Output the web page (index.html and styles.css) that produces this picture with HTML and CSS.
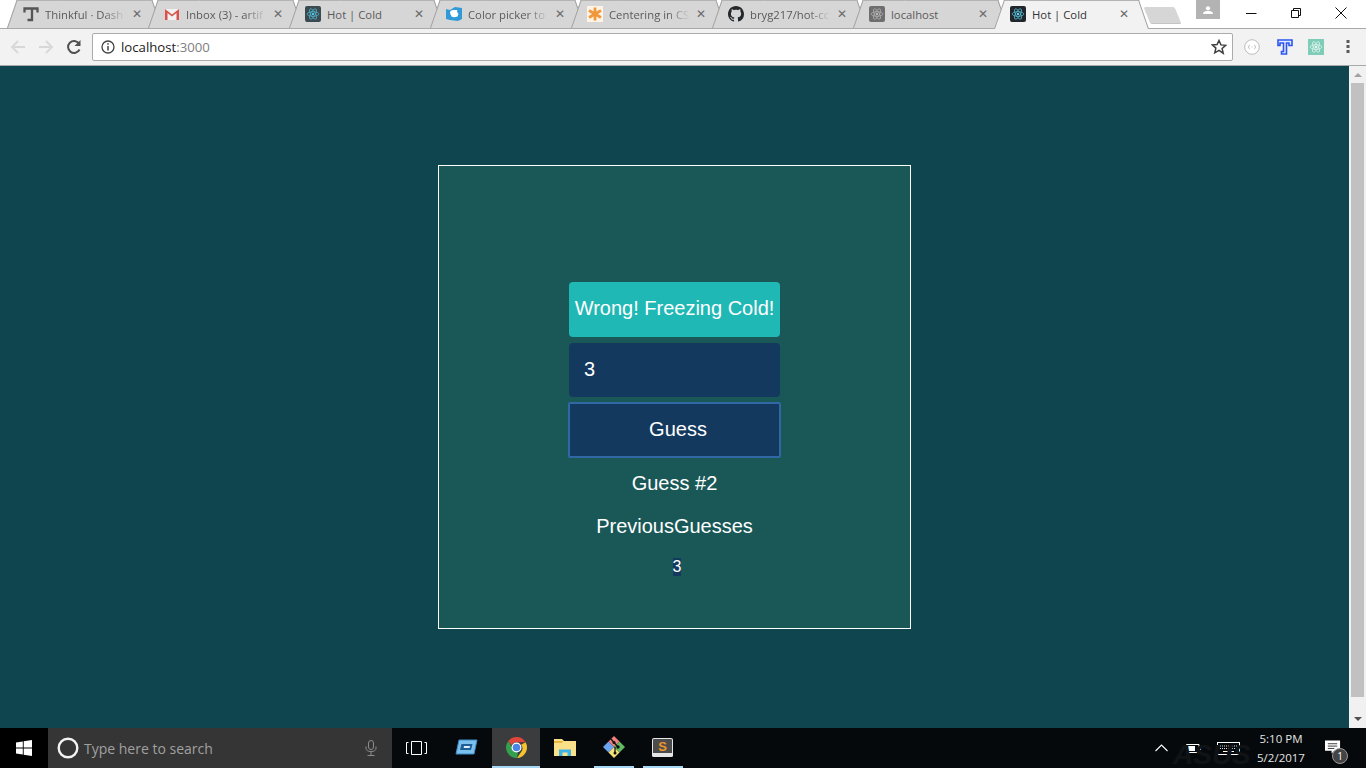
FILE: index.html
```html
<!DOCTYPE html>
<html lang="en">
<head>
<meta charset="utf-8">
<title>Hot | Cold</title>
<link rel="stylesheet" href="styles.css">
</head>
<body>
<svg class="defs" width="0" height="0" aria-hidden="true">
  <symbol id="atom" viewBox="0 0 24 24">
    <circle cx="12" cy="12" r="2.1" fill="currentColor"/>
    <g fill="none" stroke="currentColor" stroke-width="1.1">
      <ellipse cx="12" cy="12" rx="10" ry="4"/>
      <ellipse cx="12" cy="12" rx="10" ry="4" transform="rotate(60 12 12)"/>
      <ellipse cx="12" cy="12" rx="10" ry="4" transform="rotate(120 12 12)"/>
    </g>
  </symbol>
</svg>

<header class="tabstrip">
  <div class="tab">
    <svg class="favicon" viewBox="0 0 16 16"><path d="M1.500 6.500V2.500h13v4M9 2.500v11.500H4.500" fill="none" stroke="#555" stroke-width="2.300"/></svg>
    <span class="tab-title">Thinkful · Dash</span><span class="tab-x">✕</span>
  </div>
  <div class="tab">
    <svg class="favicon" viewBox="0 0 16 16"><path d="M1 3h14v11h-14z" fill="#f1f1f1"/><path d="M1 14v-11l7 5.500 7-5.500v11h-2.500v-7l-4.500 3.500-4.500-3.500v7z" fill="#d9534a"/></svg>
    <span class="tab-title">Inbox (3) - artif</span><span class="tab-x">✕</span>
  </div>
  <div class="tab">
    <span class="fav-box"><svg class="atom-sm"><use href="#atom"/></svg></span>
    <span class="tab-title tab-title-full">Hot | Cold</span><span class="tab-x">✕</span>
  </div>
  <div class="tab">
    <svg class="favicon" viewBox="0 0 16 16"><path d="M0 3l4 1 5-3 7 1v11l-4 2-8-1-4-1z" fill="#2f9ad8"/><path d="M4 7q0-3 3.500-3h4q-1 1.500 0 2.500l1 1.500-1 2.500q-4 1.500-6 0z" fill="#fff"/></svg>
    <span class="tab-title">Color picker to</span><span class="tab-x">✕</span>
  </div>
  <div class="tab">
    <svg class="favicon" viewBox="0 0 16 16"><rect width="16" height="16" fill="#fdf3e6"/><g stroke="#f0983a" stroke-width="2.800" stroke-linecap="butt"><path d="M8 1.500v13"/><path d="M2 4.500l12 7"/><path d="M14 4.500l-12 7"/></g></svg>
    <span class="tab-title">Centering in CS</span><span class="tab-x">✕</span>
  </div>
  <div class="tab">
    <svg class="favicon" viewBox="0 0 16 16"><path fill="#24292e" d="M8 0C3.580 0 0 3.580 0 8c0 3.540 2.290 6.530 5.470 7.590.4.070.55-.17.55-.38 0-.19-.01-.82-.01-1.490-2.010.37-2.530-.49-2.690-.94-.09-.23-.48-.94-.82-1.130-.28-.15-.68-.52-.01-.53.63-.01 1.080.58 1.230.82.72 1.210 1.870.87 2.330.66.070-.52.28-.87.51-1.070-1.780-.2-3.640-.89-3.640-3.950 0-.87.31-1.590.82-2.150-.08-.2-.36-1.020.08-2.120 0 0 .67-.21 2.200.82.64-.18 1.320-.27 2-.27.68 0 1.360.09 2 .27 1.530-1.040 2.200-.82 2.200-.82.44 1.100.16 1.920.08 2.120.51.56.82 1.270.82 2.150 0 3.070-1.870 3.750-3.650 3.950.29.25.54.73.54 1.480 0 1.070-.01 1.930-.01 2.200 0 .21.15.46.55.38A8.013 8.013 0 0016 8c0-4.420-3.580-8-8-8z"/></svg>
    <span class="tab-title">bryg217/hot-cc</span><span class="tab-x">✕</span>
  </div>
  <div class="tab">
    <span class="fav-box fav-grey"><svg class="atom-sm"><use href="#atom"/></svg></span>
    <span class="tab-title tab-title-full">localhost</span><span class="tab-x">✕</span>
  </div>
  <div class="tab tab-active">
    <span class="fav-box fav-dark"><svg class="atom-sm"><use href="#atom"/></svg></span>
    <span class="tab-title tab-title-full">Hot | Cold</span><span class="tab-x">✕</span>
  </div>
  <div class="newtab"></div>
  <div class="winctl">
    <div class="profile">
      <svg width="10" height="8" viewBox="0 0 12 10"><circle cx="6" cy="2.800" r="2.600" fill="#fff"/><path d="M0 10v-2q2-2 6-2t6 2v2z" fill="#fff"/></svg>
    </div>
    <svg class="wc wc-min" width="12" height="12" viewBox="0 0 12 12"><path d="M1 6.500h10.500" stroke="#111" stroke-width="1"/></svg>
    <svg class="wc wc-max" width="12" height="12" viewBox="0 0 12 12"><path d="M1.500 3.500h7v7h-7z M3.500 3.500v-2h7v7h-2" fill="none" stroke="#111" stroke-width="1"/></svg>
    <svg class="wc wc-close" width="12" height="12" viewBox="0 0 12 12"><path d="M.5.500l11 11M11.500.500l-11 11" stroke="#111" stroke-width="1"/></svg>
  </div>
</header>

<nav class="toolbar">
  <svg class="tool" width="16" height="16" viewBox="0 0 16 16"><path d="M15 8H2.500M8 2L2 8l6 6" fill="none" stroke="#d8d8d8" stroke-width="1.800"/></svg>
  <svg class="tool" width="16" height="16" viewBox="0 0 16 16"><path d="M1 8h12.500M8 2l6 6-6 6" fill="none" stroke="#d8d8d8" stroke-width="1.800"/></svg>
  <svg class="tool" width="16" height="16" viewBox="0 0 16 16"><path d="M13.500 10.500A6 6 0 1 1 13 4.500" fill="none" stroke="#505050" stroke-width="2"/><path d="M14.500 1v6h-6z" fill="#505050"/></svg>
  <div class="omnibox">
    <svg class="info" width="14" height="14" viewBox="0 0 14 14"><circle cx="7" cy="7" r="6" fill="none" stroke="#444" stroke-width="1.300"/><path d="M7 6v4.500M7 3.300v1.500" stroke="#444" stroke-width="1.500"/></svg>
    <span class="url"><span class="host">localhost</span>:3000</span>
    <svg class="star" width="16" height="16" viewBox="0 0 16 16"><path d="M8 1.500l1.900 4.400 4.800.4-3.600 3.200 1.100 4.700L8 11.300l-4.200 2.500 1.100-4.700-3.600-3.200 4.800-.4z" fill="none" stroke="#404040" stroke-width="1.500"/></svg>
  </div>
  <div class="extensions">
    <svg class="ext ext-round" width="16" height="16" viewBox="0 0 16 16"><circle cx="8" cy="8" r="7.300" fill="#fff" stroke="#bdbdbd" stroke-width="1"/><path d="M6 6q-1 0-1 1t-1 1q1 0 1 1t1 1M10 6q1 0 1 1t1 1q-1 0-1 1t-1 1M7.500 8h1" fill="none" stroke="#b0b0b0" stroke-width=".7"/></svg>
    <svg class="ext ext-t" width="16" height="16" viewBox="0 0 16 16"><path d="M1 1h14v5.500h-3v-2.500h-2.500v11h-5v-2.500h2v-8.500h-3.500v2.500h-2z" fill="#e6ecff" stroke="#2c55f0" stroke-width="1.600"/></svg>
    <span class="ext-react"><svg class="atom-sm"><use href="#atom"/></svg></span>
    <svg class="ext ext-dots" width="4" height="14" viewBox="0 0 4 14"><g fill="#5a5a5a"><rect x=".5" y="0" width="3" height="3"/><rect x=".5" y="5" width="3" height="3"/><rect x=".5" y="10" width="3" height="3"/></g></svg>
  </div>
</nav>

<div class="viewport">
  <main class="page">
    <section class="game">
      <div class="feedback">Wrong! Freezing Cold!</div>
      <input class="guess-input" type="text" value="3" aria-label="Guess">
      <button class="guess-btn" type="button">Guess</button>
      <p class="count">Guess #2</p>
      <p class="prev">PreviousGuesses</p>
      <p class="list"><span class="list-item">3</span></p>
    </section>
  </main>
  <aside class="scrollbar">
    <span class="arrow arrow-up"></span>
    <span class="thumb"></span>
    <span class="arrow arrow-down"></span>
  </aside>
</div>

<footer class="taskbar">
  <div class="start">
    <svg width="16" height="16" viewBox="0 0 16 16"><path fill="#fff" d="M0 2.400l6.800-1v6.200H0zM7.700 1.300L16 0v7.600H7.700zM0 8.400h6.800v6.200l-6.800-1zM7.700 8.400H16V16l-8.300-1.300z"/></svg>
  </div>
  <div class="search">
    <svg class="cortana" width="22" height="22" viewBox="0 0 22 22"><circle cx="11" cy="11" r="9.300" fill="none" stroke="#f2f2f2" stroke-width="2.400"/></svg>
    <span class="search-text">Type here to search</span>
    <svg class="mic" width="12" height="16" viewBox="0 0 12 16"><rect x="3.500" y=".5" width="5" height="9" rx="2.500" fill="none" stroke="#8c8c8c"/><path d="M1 6.500v1.500q0 3.500 5 3.500t5-3.500v-1.500M6 11.500v4M2.500 15.500h7" fill="none" stroke="#8c8c8c"/></svg>
  </div>
  <div class="taskview">
    <svg width="21" height="14" viewBox="0 0 21 14"><path d="M5.500.5h10v13h-10z" fill="none" stroke="#fff"/><path d="M2.500 1.500H.5v11h2M18.500 1.500h2v11h-2" fill="none" stroke="#fff"/></svg>
  </div>
  <div class="app app-slim">
    <svg width="24" height="16" viewBox="0 0 24 16"><path d="M5 1h18l-3 14H2z" fill="#7cc0ee" stroke="#3a8dc8"/><path d="M7.500 5h11l-1.500 6H6z" fill="#1d5f96"/><path d="M10 7h6l-.4 2H9.600z" fill="#dff1fc"/></svg>
  </div>
  <div class="app app-active">
    <svg width="23" height="23" viewBox="0 0 24 24">
      <path d="M12 1a11 11 0 0 1 9.530 5.500H12a5.500 5.500 0 0 0-5.100 3.400L3.500 5.200A11 11 0 0 1 12 1z" fill="#e0463a"/>
      <path d="M21.530 6.500A11 11 0 0 1 12.500 23l4.300-6.400A5.500 5.500 0 0 0 16.800 9z" fill="#f6c22d"/>
      <path d="M3.500 5.200l4.700 8.100a5.500 5.500 0 0 0 5.300 3.900l-1 5.800A11 11 0 0 1 3.500 5.200z" fill="#33a04f"/>
      <circle cx="12" cy="12" r="4.600" fill="#4a86e8" stroke="#fff" stroke-width="1.300"/>
    </svg>
  </div>
  <div class="app">
    <svg width="22" height="18" viewBox="0 0 22 18"><path d="M0 1h8l2 2h12v15H0z" fill="#fbe08a"/><path d="M0 3h9l-1 2H0z" fill="#e8b93e"/><path d="M5 18v-6.500h12V18h-3.500v-3.500h-5V18z" fill="#3fb2e6"/></svg>
  </div>
  <div class="app app-open">
    <svg width="24" height="24" viewBox="0 0 24 24"><path d="M12 12L6.500 6.500 1 12l5.500 5.500z" fill="#6ba4f0"/><path d="M12 12l5.500-5.500L12 1 6.500 6.500z" fill="#f08080"/><path d="M12 12l5.500 5.500L23 12l-5.500-5.500z" fill="#62bb62"/><path d="M12 12l-5.500 5.500L12 23l5.500-5.500z" fill="#f5e27a"/><path d="M8 3l8 9M13 12v6" stroke="#111" stroke-width="1.300"/><circle cx="16" cy="12" r="1.700" fill="#111"/><circle cx="13" cy="18" r="1.500" fill="#111"/><circle cx="12" cy="7.500" r="1.500" fill="#111"/></svg>
  </div>
  <div class="app app-open">
    <svg width="23" height="21" viewBox="0 0 23 21"><path d="M1 19V3q0-2 2-2h17q2 0 2 2v16q0 1-2 1H3q-2 0-2-1z" fill="#e6e6e6"/><path d="M2 16V3q0-1 1-1h17q1 0 1 1v13z" fill="#4c4c4c"/><text x="11.500" y="14" class="sublime-s">S</text></svg>
  </div>
  <div class="tray">
    <span class="asus">ASUS</span>
    <svg width="13" height="8" viewBox="0 0 13 8"><path d="M.5 7l6-6 6 6" fill="none" stroke="#fff" stroke-width="1.100"/></svg>
    <svg width="15" height="9" viewBox="0 0 15 9"><path d="M.5.500h12.500v8H.5z" fill="none" stroke="#fff"/><rect x="2" y="2" width="7" height="5" fill="#fff"/><rect x="13.500" y="3" width="1.500" height="3" fill="#fff"/></svg>
    <svg width="23" height="13" viewBox="0 0 23 13"><rect x=".5" y=".5" width="22" height="12" fill="none" stroke="#fff"/><path d="M3 4h17M3 6.500h17" stroke="#ddd" stroke-dasharray="1 1"/><path d="M6 9.500h11" stroke="#fff"/></svg>
    <div class="clock"><div>5:10 PM</div><div>5/2/2017</div></div>
    <div class="notify">
      <svg class="bubble" width="16" height="15" viewBox="0 0 17 15"><path d="M0 0h16v11h-6l-3 3v-3H0z" fill="#fff"/><path d="M3 3.500h10M3 6h10M3 8.500h7" stroke="#333"/></svg>
      <span class="badge">1</span>
    </div>
  </div>
</footer>
</body>
</html>
```
FILE: styles.css
```css
* { box-sizing: border-box; }
html, body { margin: 0; height: 100%; }
body {
  width: 1366px;
  height: 768px;
  overflow: hidden;
  display: flex;
  flex-direction: column;
  background: #fff;
  font-family: "Liberation Sans", Arial, sans-serif;
}
.defs { position: absolute; }

/* tab strip */
.tabstrip {
  position: relative;
  height: 29px;
  flex: none;
  display: flex;
  padding-left: 7px;
  background: #fff;
  font-family: "Open Sans", "Noto Sans", sans-serif;
  font-size: 11.3px;
}
.tabstrip::after {
  content: "";
  position: absolute;
  left: 0; right: 0; bottom: 0;
  height: 1px;
  background: #a9a9a9;
  z-index: 2;
}
.tab {
  position: relative;
  z-index: 1;
  isolation: isolate;
  width: 155px;
  height: 28px;
  margin-right: -14px;
  padding: 0 18px 0 16px;
  display: flex;
  align-items: center;
  gap: 6px;
  color: #5a5a5a;
  flex: none;
}
.tab::before, .tab::after {
  content: "";
  position: absolute;
  top: 0; bottom: 0;
  width: 60%;
  background: #d6d6d6;
  border-top: 1px solid #b4b4b4;
  z-index: -1;
}
.tab::before {
  left: 0;
  transform-origin: bottom left;
  transform: skewX(-19deg);
  border-left: 1px solid #a0a0a0;
}
.tab::after {
  right: 0;
  transform-origin: bottom right;
  transform: skewX(19deg);
  border-right: 1px solid #a0a0a0;
}
.tab-active { z-index: 3; height: 29px; color: #333; padding-bottom: 1px; }
.tab-active::before, .tab-active::after { background: #f2f2f2; }
.favicon { width: 16px; height: 16px; flex: none; }
.fav-box {
  width: 16px; height: 16px; flex: none;
  border-radius: 2px;
  background: #3b4a50;
  color: #50c6e0;
  display: flex;
  align-items: center;
  justify-content: center;
}
.fav-grey { background: #6e6e6e; color: #b8b8b8; }
.fav-dark { background: #20262a; color: #5fd3f0; }
.atom-sm { width: 14px; height: 14px; display: block; }
.tab-title {
  flex: 1;
  min-width: 0;
  white-space: nowrap;
  -webkit-mask-image: linear-gradient(to right, #000 72%, transparent 100%);
  mask-image: linear-gradient(to right, #000 72%, transparent 100%);
}
.tab-title-full { -webkit-mask-image: none; mask-image: none; }
.tab-x { flex: none; width: 12px; font-size: 12px; font-weight: 700; color: #6a6a6a; line-height: 1; font-family: "DejaVu Sans", sans-serif; }
.newtab {
  position: absolute;
  left: 1147px; top: 7px;
  width: 31px; height: 17px;
  background: #d6d6d6;
  border-bottom: 1px solid #c4c4c4;
  border-radius: 2px;
  transform: skewX(22deg);
}
.winctl {
  position: absolute;
  right: 0; top: 0;
  width: 170px;
  height: 20px;
  display: flex;
  align-items: flex-start;
}
.profile {
  width: 24px; height: 19px;
  background: #b3b3b3;
  display: flex;
  align-items: center;
  justify-content: center;
}
.wc { margin-top: 7px; flex: none; }
.wc-min { margin-left: 25px; }
.wc-max { margin-left: 33px; }
.wc-close { margin-left: 33px; }

/* toolbar */
.toolbar {
  height: 37px;
  flex: none;
  background: #f2f2f2;
  border-bottom: 1px solid #a9a9a9;
  display: flex;
  align-items: center;
  padding: 0 0 0 10px;
}
.tool { flex: none; margin-right: 12px; }
.omnibox {
  margin-left: -2px;
  width: 1141px;
  height: 28px;
  flex: none;
  background: #fff;
  border: 1px solid #ababab;
  border-radius: 2px;
  display: flex;
  align-items: center;
  padding: 0 5px 0 8px;
  font-family: "Open Sans", "Noto Sans", sans-serif;
  font-size: 13.2px;
  color: #808080;
}
.url { margin-left: 6px; flex: 1; }
.host { color: #222; }
.star { flex: none; }
.extensions {
  flex: 1;
  display: flex;
  align-items: center;
  padding-left: 11px;
}
.ext { flex: none; }
.ext-t { margin-left: 17px; }
.ext-react {
  width: 16px; height: 16px;
  margin-left: 15px;
  background: #7fcdb8;
  color: #e8f8f3;
  display: flex;
  align-items: center;
  justify-content: center;
}
.ext-dots { margin-left: 22px; }

/* viewport */
.viewport { flex: 1; min-height: 0; display: flex; }
.page {
  flex: 1;
  background: #0f454f;
  display: flex;
  align-items: center;
  justify-content: center;
}
.game {
  width: 473px;
  height: 464px;
  background: #1a5858;
  border: 1px solid #fff;
  padding-top: 116px;
  display: flex;
  flex-direction: column;
  align-items: center;
  color: #fff;
  font-size: 20px;
}
.feedback {
  width: 211px;
  height: 55px;
  padding-bottom: 2px;
  background: #20b8b5;
  border-radius: 4px;
  display: flex;
  align-items: center;
  justify-content: center;
  white-space: nowrap;
}
.guess-input {
  width: 211px;
  height: 54px;
  margin-top: 6px;
  padding: 0 15px 2px;
  background: #14395e;
  border: 0;
  border-radius: 4px;
  color: #fff;
  font: inherit;
  outline: none;
}
.guess-btn {
  width: 213px;
  height: 56px;
  margin-top: 5px;
  padding: 0 0 2px 7px;
  background: #14395e;
  border: 2px solid #2f68a5;
  border-radius: 2px;
  color: #fff;
  font: inherit;
}
.count, .prev { margin: 0; height: 23px; line-height: 23px; }
.count { margin-top: 14px; }
.prev { margin-top: 20px; }
.list { margin: 20px 0 0 5px; font-size: 16px; line-height: 18px; height: 18px; }
.list-item { display: block; background: #14395e; }

/* scrollbar */
.scrollbar {
  width: 17px;
  flex: none;
  background: #f1f1f1;
  display: flex;
  flex-direction: column;
  align-items: center;
  justify-content: space-between;
  padding: 7px 0;
}
.arrow { width: 0; height: 0; border-left: 4px solid transparent; border-right: 4px solid transparent; }
.arrow-up { border-bottom: 4px solid #a3a3a3; }
.arrow-down { border-top: 4px solid #505050; }
.thumb { width: 13px; height: 614px; margin: 6px 0 auto; background: #c1c1c1; }

/* taskbar */
.taskbar {
  height: 40px;
  flex: none;
  background: #05090c;
  display: flex;
  align-items: stretch;
  color: #fff;
  font-family: "Open Sans", "Noto Sans", sans-serif;
}
.start { width: 48px; flex: none; background: #000; display: flex; align-items: center; justify-content: center; }
.search {
  width: 344px;
  flex: none;
  background: #353535;
  display: flex;
  align-items: center;
  padding: 0 15px 0 9px;
  gap: 5px;
}
.cortana { flex: none; }
.search-text { flex: 1; font-size: 14px; color: #a0a0a0; white-space: nowrap; }
.taskview { width: 48px; flex: none; display: flex; align-items: center; justify-content: center; }
.app { flex: none; display: flex; align-items: center; justify-content: center; width: 49px; border-bottom: 2px solid transparent; }
.app-slim { width: 52px; }
.app-active { width: 48px; background: #3a3c3e; border-bottom-color: #a6d8f5; }
.app-open { position: relative; }
.app-open::after {
  content: "";
  position: absolute;
  left: 5px; right: 4px; bottom: -2px;
  height: 2px;
  background: #a6d8f5;
}
.sublime-s { font: 700 13px "Liberation Sans", sans-serif; fill: #f0962a; text-anchor: middle; }
.tray {
  position: relative;
  flex: 1;
  min-width: 0;
  display: flex;
  align-items: center;
  padding-left: 468px;
}
.tray > svg { flex: none; }
.tray > svg:nth-of-type(1) { margin-right: 18px; }
.tray > svg:nth-of-type(2) { margin-right: 16px; }
.asus {
  position: absolute;
  left: 486px; top: 11px;
  font: italic 700 28px "Liberation Sans", sans-serif;
  color: #101316;
}
.clock { position: relative; flex: none; width: 78px; margin-left: 2px; text-align: center; font-size: 11.5px; line-height: 19px; color: #e4e4e4; }
.notify { position: relative; flex: none; margin-left: 5px; width: 24px; height: 30px; padding-top: 7px; }
.bubble { display: block; }
.badge {
  position: absolute;
  left: 7px; top: 15px;
  width: 16px; height: 16px;
  border-radius: 50%;
  background: #444;
  border: 1px solid #999;
  font-size: 10px;
  line-height: 14px;
  text-align: center;
}
```
